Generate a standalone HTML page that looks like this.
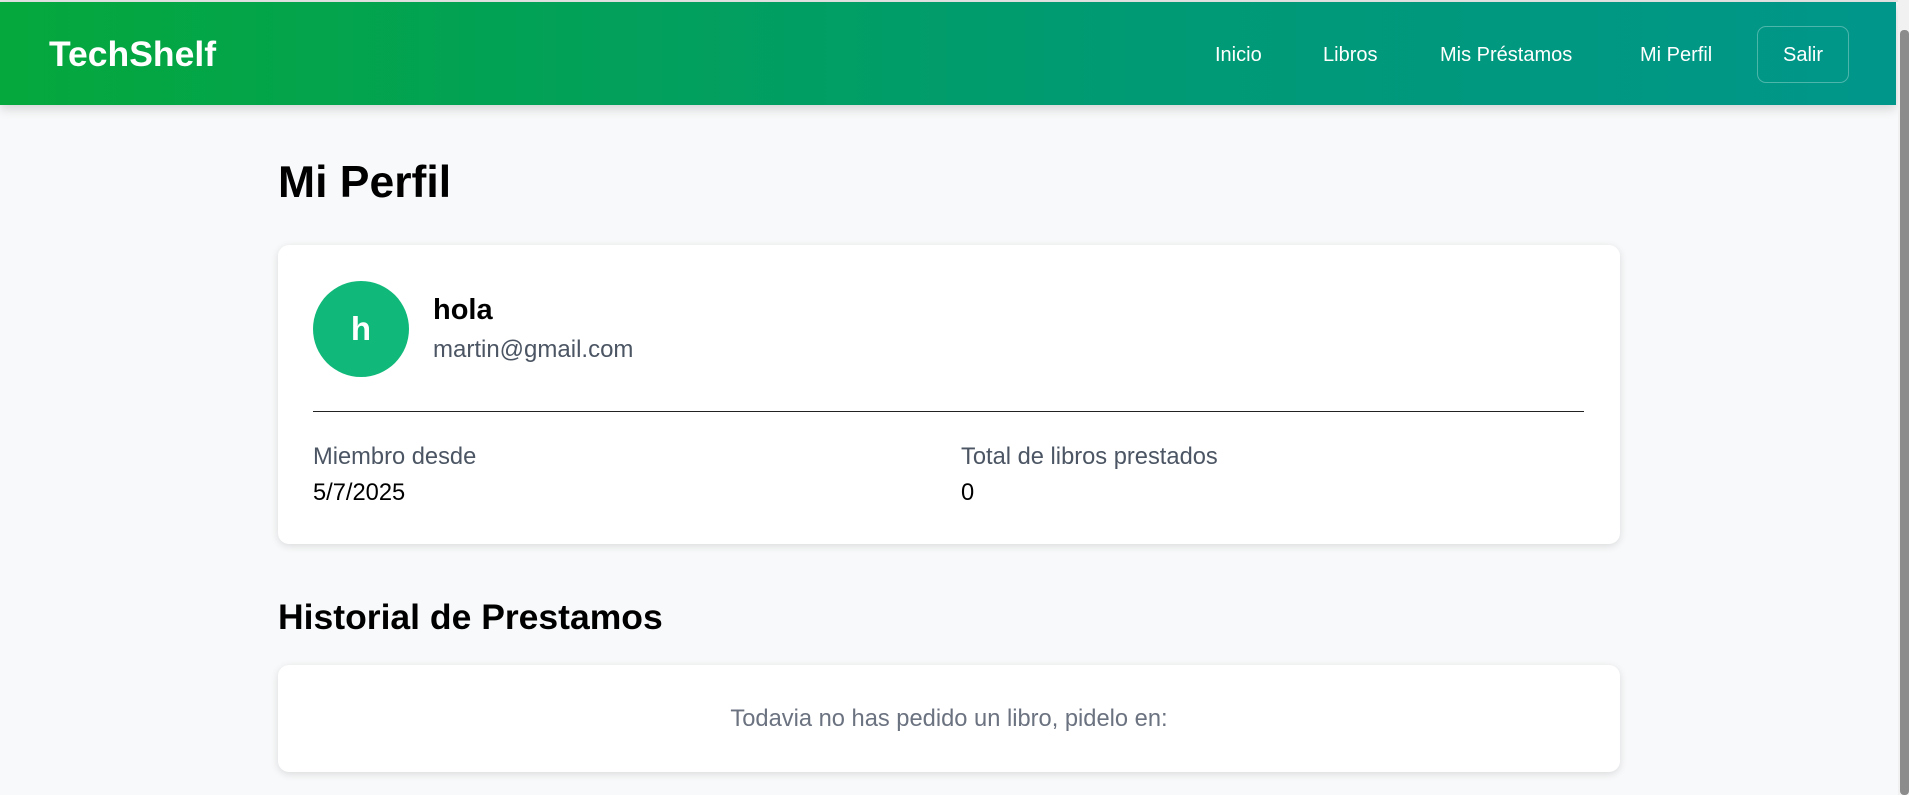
<!DOCTYPE html>
<html><head><meta charset="utf-8"><style>
*{margin:0;padding:0;box-sizing:border-box}
html,body{width:1909px;height:795px;overflow:hidden;background:#f8f9fa;font-family:"Liberation Sans",Arial,sans-serif;position:relative}
.top{position:absolute;left:0;top:0;width:1909px;height:2px;background:#e5e5e5}
header{position:absolute;left:0;top:2px;width:1896px;height:103px;background:linear-gradient(90deg,#04a83c 0%,#009a74 60%,#00968a 100%);box-shadow:0 4px 10px rgba(0,0,0,.15)}
.logo{position:absolute;left:49px;top:32px;color:#fff;font-weight:bold;font-size:35.5px}
.nav{position:absolute;color:#fff;font-size:20px;top:42px}
.btn{position:absolute;left:1757px;top:24px;width:92px;height:57px;border:1px solid rgba(255,255,255,.3);border-radius:9px;color:#fff;font-size:20px;text-align:center;line-height:57px}
.sb{position:absolute;left:1898px;top:0;width:11px;height:795px;background:#f1f1f1}
.sb div{position:absolute;left:2px;top:30px;width:9px;height:765px;background:#8c8c8c;border-radius:4px}
h1{position:absolute;left:278px;top:158px;font-size:44.5px;font-weight:bold;color:#000}
.card{position:absolute;left:278px;width:1342px;background:#fff;border-radius:11px;box-shadow:0 2px 8px rgba(0,0,0,.12)}
.av{position:absolute;left:35px;top:36px;width:96px;height:96px;border-radius:50%;background:#10b97a;color:#fff;font-weight:bold;font-size:33px;text-align:center;line-height:96px}
.t{position:absolute;white-space:nowrap}
h2{position:absolute;left:278px;top:597px;font-size:35.5px;font-weight:bold;color:#000}
</style></head><body>
<div class="top"></div>
<header>
<div class="logo">TechShelf</div>
<div class="nav" style="left:1215px">Inicio</div>
<div class="nav" style="left:1323px">Libros</div>
<div class="nav" style="left:1440px">Mis Préstamos</div>
<div class="nav" style="left:1640px">Mi Perfil</div>
<div class="btn">Salir</div>
</header>
<div class="sb"><div></div></div>
<h1>Mi Perfil</h1>
<div class="card" style="top:245px;height:299px">
<div class="av">h</div>
<div class="t" style="left:155px;top:49px;font-size:29px;font-weight:bold;color:#000">hola</div>
<div class="t" style="left:155px;top:91px;font-size:24px;color:#4b5563">martin@gmail.com</div>
<div style="position:absolute;left:35px;top:166px;width:1271px;height:1px;background:#222"></div>
<div class="t" style="left:35px;top:199px;font-size:23.7px;color:#4b5563">Miembro desde</div>
<div class="t" style="left:35px;top:235px;font-size:23.7px;color:#000">5/7/2025</div>
<div class="t" style="left:683px;top:199px;font-size:23.7px;color:#4b5563">Total de libros prestados</div>
<div class="t" style="left:683px;top:235px;font-size:23.7px;color:#000">0</div>
</div>
<h2>Historial de Prestamos</h2>
<div class="card" style="top:665px;height:107px">
<div class="t" style="left:0;width:1342px;text-align:center;top:41px;font-size:23.7px;color:#6b7280">Todavia no has pedido un libro, pidelo en:</div>
</div>
</body></html>
